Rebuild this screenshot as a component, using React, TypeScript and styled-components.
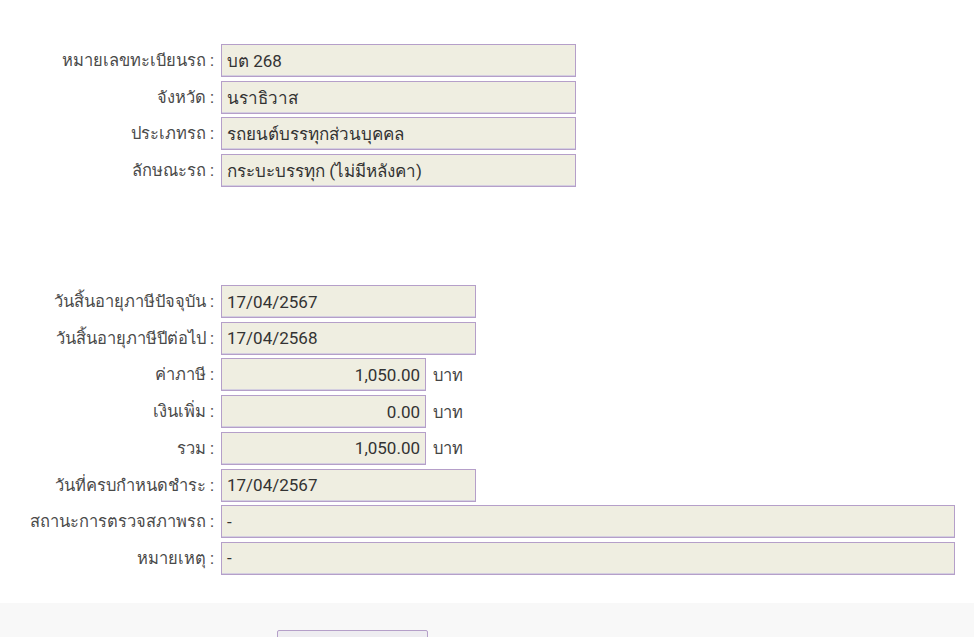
import React from 'react';
import styled, { createGlobalStyle } from 'styled-components';

const GlobalStyle = createGlobalStyle`
  html, body {
    margin: 0;
    padding: 0;
    background: #fff;
  }
  body {
    font-family: Roboto, "Noto Sans", "DejaVu Sans", sans-serif;
    color: #333;
  }
`;

const Page = styled.div`
  width: 974px;
  height: 637px;
  overflow: hidden;
  display: flex;
  flex-direction: column;
`;

const Form = styled.div`
  padding-top: 44px;
  display: flex;
  flex-direction: column;
`;

const Group = styled.div<{ $top?: number }>`
  display: grid;
  grid-template-columns: 221px 1fr;
  row-gap: 3.7px;
  margin-top: ${(p) => p.$top ?? 0}px;
`;

const Label = styled.label`
  text-align: right;
  padding-right: 7px;
  font-size: 16.5px;
  color: #4a4a4a;
  line-height: 33px;
  white-space: nowrap;
`;

const Cell = styled.div`
  display: flex;
  align-items: center;
  gap: 7px;
`;

const Field = styled.div<{ $w: number; $right?: boolean }>`
  box-sizing: border-box;
  width: ${(p) => p.$w}px;
  height: 33px;
  background: #efeee1;
  border: 1px solid #b59fc9;
  box-shadow: inset 0 -1px 0 #d4cfe0;
  padding: 0 5px;
  font-size: 17px;
  color: #333;
  display: flex;
  align-items: center;
  justify-content: ${(p) => (p.$right ? 'flex-end' : 'flex-start')};
  white-space: nowrap;
`;

const Unit = styled.span`
  font-size: 16.5px;
  color: #444;
`;

const Footer = styled.div`
  margin-top: 28px;
  flex: 1;
  background: #f8f8f8;
  padding: 27px 0 0 277px;
`;

const Button = styled.button`
  width: 151px;
  height: 32px;
  background: #eeedf1;
  border: 1px solid #b59fc9;
  border-radius: 2px;
`;

type Row = { label: string; value: string; w: number; right?: boolean; unit?: string };

const carRows: Row[] = [
  { label: 'หมายเลขทะเบียนรถ :', value: 'บต 268', w: 355 },
  { label: 'จังหวัด :', value: 'นราธิวาส', w: 355 },
  { label: 'ประเภทรถ :', value: 'รถยนต์บรรทุกส่วนบุคคล', w: 355 },
  { label: 'ลักษณะรถ :', value: 'กระบะบรรทุก (ไม่มีหลังคา)', w: 355 },
];

const taxRows: Row[] = [
  { label: 'วันสิ้นอายุภาษีปัจจุบัน :', value: '17/04/2567', w: 255 },
  { label: 'วันสิ้นอายุภาษีปีต่อไป :', value: '17/04/2568', w: 255 },
  { label: 'ค่าภาษี :', value: '1,050.00', w: 205, right: true, unit: 'บาท' },
  { label: 'เงินเพิ่ม :', value: '0.00', w: 205, right: true, unit: 'บาท' },
  { label: 'รวม :', value: '1,050.00', w: 205, right: true, unit: 'บาท' },
  { label: 'วันที่ครบกำหนดชำระ :', value: '17/04/2567', w: 255 },
  { label: 'สถานะการตรวจสภาพรถ :', value: '-', w: 734 },
  { label: 'หมายเหตุ :', value: '-', w: 734 },
];

function Rows({ rows }: { rows: Row[] }) {
  return (
    <>
      {rows.map((r) => (
        <React.Fragment key={r.label}>
          <Label>{r.label}</Label>
          <Cell>
            <Field $w={r.w} $right={r.right}>{r.value}</Field>
            {r.unit && <Unit>{r.unit}</Unit>}
          </Cell>
        </React.Fragment>
      ))}
    </>
  );
}

export default function App() {
  return (
    <Page>
      <GlobalStyle />
      <Form>
        <Group>
          <Rows rows={carRows} />
        </Group>
        <Group $top={98}>
          <Rows rows={taxRows} />
        </Group>
      </Form>
      <Footer>
        <Button />
      </Footer>
    </Page>
  );
}
